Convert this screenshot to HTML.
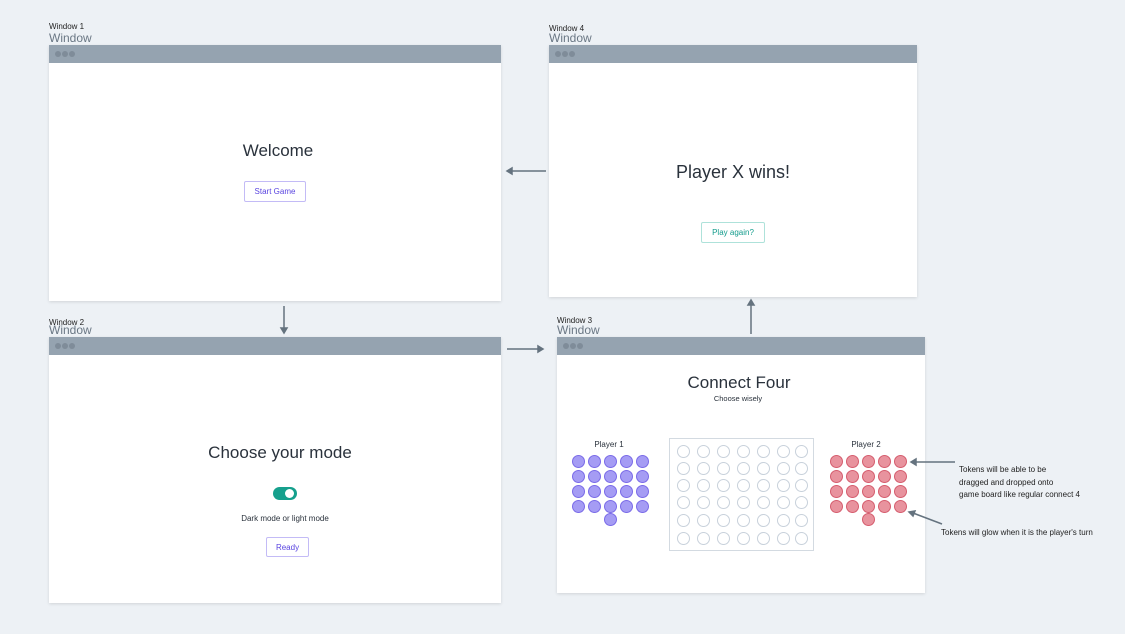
<!DOCTYPE html><html><head><style>
*{margin:0;padding:0;box-sizing:border-box}
body{width:1125px;height:634px;background:#edf1f5;font-family:"Liberation Sans",sans-serif;position:relative;overflow:hidden;color:#2a323c}
.a{position:absolute}
.win{position:absolute;background:#fff;box-shadow:0 1px 3px rgba(0,0,0,.12)}
.tb{height:18px;background:#95a3b0;position:relative}
.tb i{position:absolute;top:6px;width:6px;height:6px;border-radius:50%;background:#7f8c99}
.l1{position:absolute;font-size:8px;color:#222}
.l2{position:absolute;font-size:12px;color:#6a7784}
.c{position:absolute;text-align:center;white-space:nowrap;transform:translateX(-50%)}
.btn{position:absolute;border:1.5px solid;border-radius:2px;font-size:8px;display:flex;align-items:center;justify-content:center;background:#fff}
.dot{position:absolute;width:13px;height:13px;border-radius:50%}
.p1{background:#a59cf4;border:1.3px solid #7a6be8}
.p2{background:#e8939e;border:1.3px solid #d55d6e}
.e{position:absolute;width:13px;height:13px;border-radius:50%;border:1.3px solid #c8d1db}
.n{position:absolute;font-size:8px;color:#222;white-space:nowrap}
</style></head><body>
<div class="l1" style="left:49px;top:22px">Window 1</div><div class="l2" style="left:49px;top:31px">Window</div>
<div class="l1" style="left:549px;top:24px">Window 4</div><div class="l2" style="left:549px;top:31px">Window</div>
<div class="l1" style="left:49px;top:318px">Window 2</div><div class="l2" style="left:49px;top:323px">Window</div>
<div class="l1" style="left:557px;top:316px">Window 3</div><div class="l2" style="left:557px;top:323px">Window</div>

<div class="win" style="left:49px;top:45px;width:452px;height:256px"><div class="tb"><i style="left:6px"></i><i style="left:13px"></i><i style="left:20px"></i></div></div>
<div class="win" style="left:549px;top:45px;width:368px;height:252px"><div class="tb"><i style="left:6px"></i><i style="left:13px"></i><i style="left:20px"></i></div></div>
<div class="win" style="left:49px;top:337px;width:452px;height:266px"><div class="tb"><i style="left:6px"></i><i style="left:13px"></i><i style="left:20px"></i></div></div>
<div class="win" style="left:557px;top:337px;width:368px;height:256px"><div class="tb"><i style="left:6px"></i><i style="left:13px"></i><i style="left:20px"></i></div></div>

<div class="c" style="left:278px;top:141px;font-size:17px">Welcome</div>
<div class="btn" style="left:244px;top:181px;width:62px;height:21px;border-color:#c3bbf6;color:#5a45e0">Start Game</div>
<div class="c" style="left:733px;top:162px;font-size:18px">Player X wins!</div>
<div class="btn" style="left:701px;top:222px;width:64px;height:21px;border-color:#aee2da;color:#139c8c">Play again?</div>
<div class="c" style="left:280px;top:443px;font-size:17px">Choose your mode</div>
<div class="a" style="left:273px;top:487px;width:24px;height:13px;border-radius:7px;background:#16a08d"><div class="a" style="left:12px;top:2px;width:9px;height:9px;border-radius:50%;background:#fff"></div></div>
<div class="c" style="left:285px;top:514px;font-size:8px">Dark mode or light mode</div>
<div class="btn" style="left:266px;top:537px;width:43px;height:20px;border-color:#c3bbf6;color:#5a45e0">Ready</div>
<div class="c" style="left:739px;top:373px;font-size:17px">Connect Four</div>
<div class="c" style="left:738px;top:394px;font-size:7.5px">Choose wisely</div>
<div class="c" style="left:609px;top:440px;font-size:8px">Player 1</div>
<div class="c" style="left:866px;top:440px;font-size:8px">Player 2</div>
<div class="a" style="left:669px;top:438px;width:145px;height:113px;border:1.5px solid #d3dae1"></div>
<div id="g"></div>
<div class="n" style="left:959px;top:464px;line-height:12.5px">Tokens will be able to be<br>dragged and dropped onto<br>game board like regular connect 4</div>
<div class="n" style="left:941px;top:528px">Tokens will glow when it is the player's turn</div>
<svg class="a" style="left:0;top:0" width="1125" height="634"><g stroke="#65737f" stroke-width="1.5" fill="#65737f">
<line x1="546" y1="171" x2="510" y2="171"/><path d="M507 171l5-3v6z"/>
<line x1="284" y1="306" x2="284" y2="330"/><path d="M284 333l-3-5h6z"/>
<line x1="507" y1="349" x2="540" y2="349"/><path d="M543 349l-5-3v6z"/>
<line x1="751" y1="334" x2="751" y2="303"/><path d="M751 300l-3 5h6z"/>
<line x1="955" y1="462" x2="915" y2="462"/><path d="M911 462l5-3v6z"/>
<line x1="942" y1="524" x2="913" y2="513"/><path d="M909 512l6 -1l-2 5z"/>
</g></svg>
<script>
var h='',xs=[578,594,610,626,642],ys=[461,476,491,506];
ys.forEach(y=>xs.forEach(x=>{h+='<div class="dot p1" style="left:'+(x-6.5)+'px;top:'+(y-6.5)+'px"></div>';h+='<div class="dot p2" style="left:'+(x+258-6.5)+'px;top:'+(y-6.5)+'px"></div>'}));
h+='<div class="dot p1" style="left:603.5px;top:512.5px"></div><div class="dot p2" style="left:861.5px;top:512.5px"></div>';
[683,703,723,743,763,783,801].forEach(x=>[451,468,485,502,520,538].forEach(y=>{h+='<div class="e" style="left:'+(x-6.5)+'px;top:'+(y-6.5)+'px"></div>'}));
document.getElementById('g').innerHTML=h;
</script>
</body></html>
